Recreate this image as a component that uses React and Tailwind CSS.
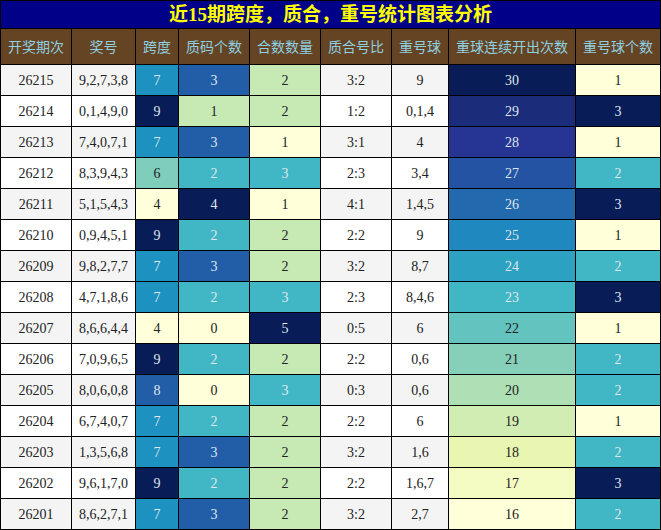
import React from 'react';

const rows = [
  { qi: '26215', hao: '9,2,7,3,8', kd: 7, zm: 3, hs: 2, bi: '3:2', ch: '9', lx: 30, gs: 1 },
  { qi: '26214', hao: '0,1,4,9,0', kd: 9, zm: 1, hs: 2, bi: '1:2', ch: '0,1,4', lx: 29, gs: 3 },
  { qi: '26213', hao: '7,4,0,7,1', kd: 7, zm: 3, hs: 1, bi: '3:1', ch: '4', lx: 28, gs: 1 },
  { qi: '26212', hao: '8,3,9,4,3', kd: 6, zm: 2, hs: 3, bi: '2:3', ch: '3,4', lx: 27, gs: 2 },
  { qi: '26211', hao: '5,1,5,4,3', kd: 4, zm: 4, hs: 1, bi: '4:1', ch: '1,4,5', lx: 26, gs: 3 },
  { qi: '26210', hao: '0,9,4,5,1', kd: 9, zm: 2, hs: 2, bi: '2:2', ch: '9', lx: 25, gs: 1 },
  { qi: '26209', hao: '9,8,2,7,7', kd: 7, zm: 3, hs: 2, bi: '3:2', ch: '8,7', lx: 24, gs: 2 },
  { qi: '26208', hao: '4,7,1,8,6', kd: 7, zm: 2, hs: 3, bi: '2:3', ch: '8,4,6', lx: 23, gs: 3 },
  { qi: '26207', hao: '8,6,6,4,4', kd: 4, zm: 0, hs: 5, bi: '0:5', ch: '6', lx: 22, gs: 1 },
  { qi: '26206', hao: '7,0,9,6,5', kd: 9, zm: 2, hs: 2, bi: '2:2', ch: '0,6', lx: 21, gs: 2 },
  { qi: '26205', hao: '8,0,6,0,8', kd: 8, zm: 0, hs: 3, bi: '0:3', ch: '0,6', lx: 20, gs: 2 },
  { qi: '26204', hao: '6,7,4,0,7', kd: 7, zm: 2, hs: 2, bi: '2:2', ch: '6', lx: 19, gs: 1 },
  { qi: '26203', hao: '1,3,5,6,8', kd: 7, zm: 3, hs: 2, bi: '3:2', ch: '1,6', lx: 18, gs: 2 },
  { qi: '26202', hao: '9,6,1,7,0', kd: 9, zm: 2, hs: 2, bi: '2:2', ch: '1,6,7', lx: 17, gs: 3 },
  { qi: '26201', hao: '8,6,2,7,1', kd: 7, zm: 3, hs: 2, bi: '3:2', ch: '2,7', lx: 16, gs: 2 },
];

const headers = ['开奖期次', '奖号', '跨度', '质码个数', '合数数量', '质合号比', '重号球', '重球连续开出次数', '重号球个数'];

// cell colour classes, written out in full
const light = 'text-[#222]';
const dark = 'text-[#dfe6ee]';

const kdColor = {
  4: `bg-[#ffffd9] ${light}`,
  6: `bg-[#7fcdbb] ${light}`,
  7: `bg-[#1d91c0] ${dark}`,
  8: `bg-[#225ea8] ${dark}`,
  9: `bg-[#081d58] ${dark}`,
};

const zmColor = {
  0: `bg-[#ffffd9] ${light}`,
  1: `bg-[#c7e9b4] ${light}`,
  2: `bg-[#41b6c4] ${dark}`,
  3: `bg-[#225ea8] ${dark}`,
  4: `bg-[#081d58] ${dark}`,
};

const hsColor = {
  1: `bg-[#ffffd9] ${light}`,
  2: `bg-[#c7e9b4] ${light}`,
  3: `bg-[#41b6c4] ${dark}`,
  5: `bg-[#081d58] ${dark}`,
};

const lxColor = {
  30: `bg-[#081d58] ${dark}`,
  29: `bg-[#1b2c7a] ${dark}`,
  28: `bg-[#263594] ${dark}`,
  27: `bg-[#2353a2] ${dark}`,
  26: `bg-[#2269ad] ${dark}`,
  25: `bg-[#1f88be] ${dark}`,
  24: `bg-[#2ca1c2] ${dark}`,
  23: `bg-[#41b6c4] ${dark}`,
  22: `bg-[#62c3bf] ${light}`,
  21: `bg-[#86d0ba] ${light}`,
  20: `bg-[#aedfb5] ${light}`,
  19: `bg-[#d1edb3] ${light}`,
  18: `bg-[#e9f6b1] ${light}`,
  17: `bg-[#f4fbc3] ${light}`,
  16: `bg-[#ffffd9] ${light}`,
};

const gsColor = {
  1: `bg-[#ffffd9] ${light}`,
  2: `bg-[#41b6c4] ${dark}`,
  3: `bg-[#081d58] ${dark}`,
};

const Cell = ({ className = '', children }) => (
  <div className={`h-[30px] flex items-center justify-center ${className}`}>{children}</div>
);

export default function App() {
  return (
    <div className="w-[661px] h-[530px] bg-black p-px grid grid-cols-[70px_63px_42px_70px_70px_70px_56px_126px_84px] gap-px content-start font-['Liberation_Serif','Noto_Sans_CJK_SC',serif] text-[14px]">
      <div className="col-span-9 h-[27px] bg-[#000088] flex items-center justify-center text-[#ffff00] font-bold text-[19px] leading-none">
        近15期跨度，质合，重号统计图表分析
      </div>
      {headers.map((h) => (
        <div
          key={h}
          className="h-[35px] bg-[#654423] flex items-center justify-center text-[#8fcfe2] font-['Noto_Sans_CJK_SC',sans-serif] text-[14px]"
        >
          {h}
        </div>
      ))}
      {rows.map((r, i) => {
        const plain = i % 2 === 0 ? 'bg-[#f4f4f4] text-[#222]' : 'bg-white text-[#222]';
        return (
          <React.Fragment key={r.qi}>
            <Cell className={plain}>{r.qi}</Cell>
            <Cell className={plain}>{r.hao}</Cell>
            <Cell className={kdColor[r.kd]}>{r.kd}</Cell>
            <Cell className={zmColor[r.zm]}>{r.zm}</Cell>
            <Cell className={hsColor[r.hs]}>{r.hs}</Cell>
            <Cell className={plain}>{r.bi}</Cell>
            <Cell className={plain}>{r.ch}</Cell>
            <Cell className={lxColor[r.lx]}>{r.lx}</Cell>
            <Cell className={gsColor[r.gs]}>{r.gs}</Cell>
          </React.Fragment>
        );
      })}
    </div>
  );
}
